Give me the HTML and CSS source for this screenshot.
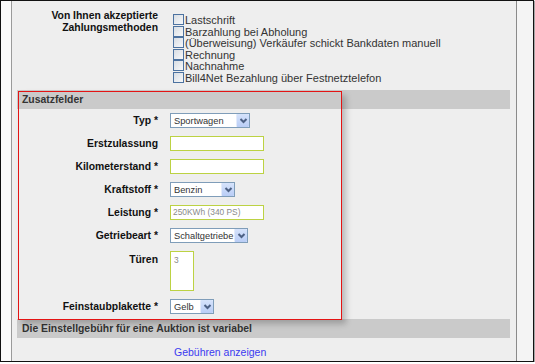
FILE: index.html
```html
<!DOCTYPE html>
<html>
<head>
    <meta charset="UTF-8" />
    <title>Zusatzfelder</title>
    <link rel="stylesheet" href="styles.css">
</head>
<body>
    <div class="window">
        <div class="gutter-left"></div>
        <div class="content">
            <!-- Zahlungsmethoden -->
            <div class="row payment">
                <div class="label">Von Ihnen akzeptierte<br>Zahlungsmethoden</div>
                <ul class="checklist">
                    <li><span class="box"></span>Lastschrift</li>
                    <li><span class="box"></span>Barzahlung bei Abholung</li>
                    <li><span class="box"></span>(Überweisung) Verkäufer schickt Bankdaten manuell</li>
                    <li><span class="box"></span>Rechnung</li>
                    <li><span class="box"></span>Nachnahme</li>
                    <li><span class="box"></span>Bill4Net Bezahlung über Festnetztelefon</li>
                </ul>
            </div>

            <div class="bar">Zusatzfelder</div>

            <div class="fields">
                <div class="label">Typ *</div>
                <div class="select w-typ"><span>Sportwagen</span><i class="btn"><svg width="11" height="11" viewBox="0 0 11 11"><path d="M2.5 4 L5.5 7 L8.5 4" fill="none" stroke="#4d6185" stroke-width="2"/></svg></i></div>

                <div class="label">Erstzulassung</div>
                <div class="input"></div>

                <div class="label">Kilometerstand *</div>
                <div class="input"></div>

                <div class="label">Kraftstoff *</div>
                <div class="select w-kraft"><span>Benzin</span><i class="btn"><svg width="11" height="11" viewBox="0 0 11 11"><path d="M2.5 4 L5.5 7 L8.5 4" fill="none" stroke="#4d6185" stroke-width="2"/></svg></i></div>

                <div class="label">Leistung *</div>
                <div class="input">250KWh (340 PS)</div>

                <div class="label">Getriebeart *</div>
                <div class="select w-getr"><span>Schaltgetriebe</span><i class="btn"><svg width="11" height="11" viewBox="0 0 11 11"><path d="M2.5 4 L5.5 7 L8.5 4" fill="none" stroke="#4d6185" stroke-width="2"/></svg></i></div>

                <div class="label top">Türen</div>
                <div class="textarea">3</div>

                <div class="label">Feinstaubplakette *</div>
                <div class="select w-fein"><span>Gelb</span><i class="btn"><svg width="11" height="11" viewBox="0 0 11 11"><path d="M2.5 4 L5.5 7 L8.5 4" fill="none" stroke="#4d6185" stroke-width="2"/></svg></i></div>
            </div>

            <div class="bar">Die Einstellgebühr für eine Auktion ist variabel</div>

            <div class="row links">
                <div></div>
                <a href="#" class="link">Gebühren anzeigen</a>
            </div>

            <!-- Markierung über dem Bereich -->
            <div class="highlight"></div>
        </div>
        <div class="gutter-right"></div>
    </div>
</body>
</html>
```

FILE: styles.css
```css
* {
    margin: 0;
    padding: 0;
    box-sizing: border-box;
}
body {
    background: #ffffff;
    font-family: "Liberation Sans", Arial, sans-serif;
    font-size: 11px;
    color: #222;
}

/* Fensterrahmen */
.window {
    width: 534px;
    height: 362px;
    border: 1px solid #111;
    box-shadow: 1px 1px 1px rgba(0,0,0,0.35);
    display: flex;
    overflow: hidden;
}
.gutter-left {
    width: 11px;
    background: #fafafa;
    border-right: 1px solid #9a9a9a;
}
.gutter-right {
    width: 17px;
    background: #f4f4f4;
    border-left: 1px solid #8a8a8a;
}
.content {
    flex: 1;
    background: #eeeeee;
    position: relative;
}

/* Zeilen mit Beschriftung links */
.row {
    display: grid;
    grid-template-columns: 146px 1fr;
    column-gap: 12px;
}
.label {
    text-align: right;
    font-weight: bold;
    font-size: 10.4px;
    color: #111;
}
.payment {
    padding-top: 9px;
    margin-bottom: 7px;
    height: 82px;
}
.payment .label {
    line-height: 12px;
}
.checklist {
    list-style: none;
    padding-top: 4px;
}
.checklist li {
    line-height: 11.5px;
    height: 11.5px;
    color: #333;
    white-space: nowrap;
}
.box {
    display: inline-block;
    width: 11px;
    height: 11px;
    margin: 0 1px 0 3px;
    vertical-align: -1px;
    border: 1px solid #4c72a0;
    background: linear-gradient(135deg, #d8dde3, #f7f8fa);
}

/* Graue Balken */
.bar {
    margin: 0 6px 0 5px;
    height: 19px;
    line-height: 19px;
    padding-left: 5px;
    background: #cacaca;
    font-weight: bold;
    font-size: 10.4px;
    color: #333;
}

/* Formularfelder */
.fields {
    display: grid;
    grid-template-columns: 146px 1fr;
    grid-template-rows: 15px 15px 15px 15px 15px 15px 40px 15px;
    column-gap: 12px;
    row-gap: 8px;
    align-items: center;
    padding: 4px 0 5px;
}
.fields .label {
    line-height: 13px;
    height: 13px;
}
.fields .label.top {
    align-self: start;
    padding-top: 2px;
    height: auto;
}
.input {
    width: 94px;
    height: 15px;
    background: #fff;
    border: 1px solid #bcd243;
    font-size: 8.4px;
    line-height: 13px;
    padding-left: 2px;
    color: #8a8a8a;
}
.textarea {
    width: 24px;
    height: 40px;
    background: #fff;
    border: 1px solid #bcd243;
    font-size: 8.4px;
    padding: 3px 0 0 3px;
    color: #8a8a8a;
}
.select {
    height: 15px;
    background: #fff;
    border: 1px solid #7f9db9;
    display: flex;
    align-items: center;
    justify-content: space-between;
    font-size: 9.3px;
    color: #333;
    padding-left: 3px;
}
.select .btn {
    width: 13px;
    height: 13px;
    background: linear-gradient(#d6e3fb, #b9cdf6);
    border-left: 1px solid #e3ebfb;
    border-radius: 1px;
    display: flex;
    align-items: center;
    justify-content: center;
}
.w-typ { width: 80px; }
.w-kraft { width: 65px; }
.w-getr { width: 78px; }
.w-fein { width: 44px; }

.links {
    padding-top: 8px;
}
.link {
    color: #3a3af0;
    text-decoration: none;
    font-size: 10.5px;
    line-height: 12px;
    padding-left: 4px;
}

/* Rote Markierung */
.highlight {
    position: absolute;
    left: 6px;
    top: 90px;
    width: 324px;
    height: 229px;
    border: 1px solid #e41414;
    box-shadow: 4px 4px 6px rgba(0,0,0,0.22);
    pointer-events: none;
}
```
